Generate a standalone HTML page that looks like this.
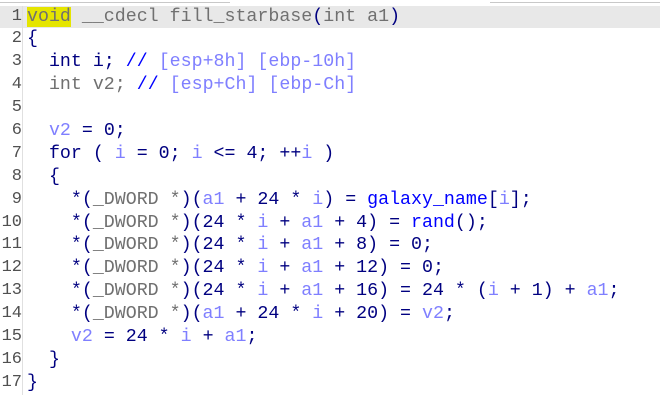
<!DOCTYPE html>
<html><head><style>
html,body{margin:0;padding:0;background:#fff;width:660px;height:401px;overflow:hidden}
.w{position:relative;font-family:"Liberation Mono","DejaVu Sans Mono",monospace;font-size:18.3px;line-height:22.9px;color:#000080;padding-top:5.5px}
.r{display:block;height:22.9px;white-space:pre}
.r.h{background:#e8e8e8}
.n{display:inline-block;width:23px;text-align:right;color:#505050;border-right:1px solid #e0e0e0;margin-right:4px;box-sizing:border-box;height:22.9px;vertical-align:top;font-size:17px}
.g{color:#707070}.v{color:#7f7fff}.b{color:#0000ff}.y{background:#e5e500;color:#707070}
.t1{position:absolute;top:2px;left:0;width:230px;height:1px;background:#c8c8c8}
.t2{position:absolute;top:2px;left:490px;width:170px;height:1px;background:#c8c8c8}
</style></head><body><div class="t1"></div><div class="t2"></div><div class="w">
<div class="r h"><span class="n">1</span><span class="y">void</span><span class="g"> __cdecl fill_starbase</span>(<span class="g">int a1</span>)</div>
<div class="r"><span class="n">2</span>{</div>
<div class="r"><span class="n">3</span>  int i; <span class="b">//</span> <span class="v">[esp+8h] [ebp-10h]</span></div>
<div class="r"><span class="n">4</span>  <span class="g">int v2;</span> <span class="b">//</span> <span class="v">[esp+Ch] [ebp-Ch]</span></div>
<div class="r"><span class="n">5</span></div>
<div class="r"><span class="n">6</span>  <span class="v">v2</span> = 0;</div>
<div class="r"><span class="n">7</span>  for ( <span class="v">i</span> = 0; <span class="v">i</span> &lt;= 4; ++<span class="v">i</span> )</div>
<div class="r"><span class="n">8</span>  {</div>
<div class="r"><span class="n">9</span>    *(<span class="g">_DWORD *</span>)(<span class="v">a1</span> + 24 * <span class="v">i</span>) = <span class="b">galaxy_name</span>[<span class="v">i</span>];</div>
<div class="r"><span class="n">10</span>    *(<span class="g">_DWORD *</span>)(24 * <span class="v">i</span> + <span class="v">a1</span> + 4) = <span class="b">rand</span>();</div>
<div class="r"><span class="n">11</span>    *(<span class="g">_DWORD *</span>)(24 * <span class="v">i</span> + <span class="v">a1</span> + 8) = 0;</div>
<div class="r"><span class="n">12</span>    *(<span class="g">_DWORD *</span>)(24 * <span class="v">i</span> + <span class="v">a1</span> + 12) = 0;</div>
<div class="r"><span class="n">13</span>    *(<span class="g">_DWORD *</span>)(24 * <span class="v">i</span> + <span class="v">a1</span> + 16) = 24 * (<span class="v">i</span> + 1) + <span class="v">a1</span>;</div>
<div class="r"><span class="n">14</span>    *(<span class="g">_DWORD *</span>)(<span class="v">a1</span> + 24 * <span class="v">i</span> + 20) = <span class="v">v2</span>;</div>
<div class="r"><span class="n">15</span>    <span class="v">v2</span> = 24 * <span class="v">i</span> + <span class="v">a1</span>;</div>
<div class="r"><span class="n">16</span>  }</div>
<div class="r"><span class="n">17</span>}</div>
</div></body></html>
